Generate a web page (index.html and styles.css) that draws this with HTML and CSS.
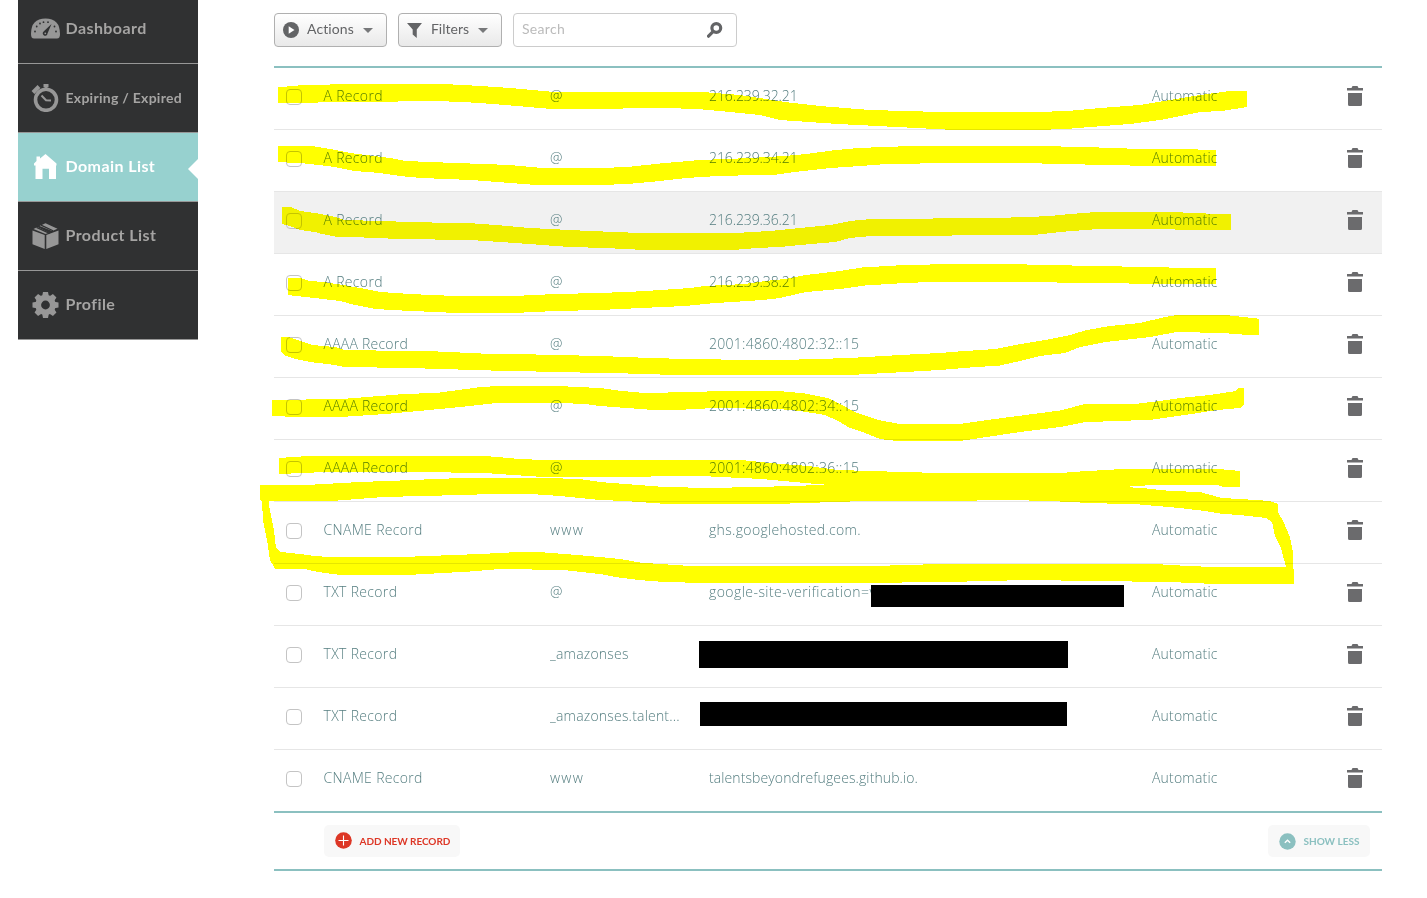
FILE: index.html
```html
<!DOCTYPE html>
<html lang="en">
<head>
<meta charset="utf-8">
<title>Domain List</title>
<link rel="stylesheet" href="styles.css">
</head>
<body>
<svg class="defs" width="0" height="0">
  <symbol id="trash" viewBox="0 0 16 20"><path d="M0 2h4.500L5.500 0h5l1 2H16v2.500H0zM1 7h14v11.500Q15 20 13.500 20h-11Q1 20 1 18.500z"/></symbol>
</svg>
<div class="page">
  <nav class="sidebar">
    <a class="item first"><svg class="icon" width="29" height="28" viewBox="0 0 29 28"><path fill="#979797" d="M3 24.500Q0 24.500 0 20Q0 4.500 14.500 4.500T29 20Q29 24.500 26 24.500z"/><g fill="#303132"><circle cx="4" cy="17.500" r=".9"/><circle cx="5.700" cy="12.500" r=".9"/><circle cx="9" cy="9.500" r=".9"/><circle cx="12.500" cy="8.200" r=".9"/><circle cx="17" cy="8.200" r=".9"/><circle cx="23.500" cy="12.500" r=".9"/><circle cx="25" cy="17.500" r=".9"/><path d="M20.500 10 16.500 19.500A2.400 2.400 0 1 1 12.600 17.500z"/></g><circle cx="14.300" cy="19.300" r=".9" fill="#979797"/></svg><span>Dashboard</span></a>
    <a class="item"><svg class="icon" width="29" height="28" viewBox="0 0 29 28"><g fill="none" stroke="#979797"><circle cx="15" cy="15.800" r="10.500" stroke-width="3.600"/><path d="M15 4V0M12.500 1.500h5" stroke-width="3"/><path d="m2 8.500 6-6" stroke-width="4"/><path d="m10.500 11.500 4.500 4.800 5 .3" stroke-width="2"/></g></svg><span class="small">Expiring / Expired</span></a>
    <a class="item active"><svg class="icon" width="29" height="28" viewBox="0 0 29 28"><path fill="#fff" d="M4.500 26V12.500H3V10.500L5.500 8V3.500H9V5.500L14.500 1 25.500 10.500v2H25V26h-7V15.800h-6.500V26z"/></svg><span>Domain List</span></a>
    <a class="item"><svg class="icon" width="29" height="28" viewBox="0 0 29 28"><path fill="#979797" d="m1.500 8.500 12.200 4.500V27L1.500 22.300zM27.500 8.500 15.300 13V27l12.200-4.700zM6.500 5 17.800 10.700 14.500 12 2.500 7zM8.500 4 14.500 1.200l12 5.500-5.200 2.300z"/><path d="m5.500 5.400 13 6M10 3.100l12 5.700" stroke="#303132" stroke-width="1.200"/></svg><span>Product List</span></a>
    <a class="item"><svg class="icon" width="29" height="28" viewBox="-14.500 -14 29 28"><g fill="#979797"><circle r="10.200"/><path id="tooth" d="M-3.300-9-2.500-13h5l.8 4zM-3.300 9-2.500 13h5l.8-4z"/><use href="#tooth" transform="rotate(45)"/><use href="#tooth" transform="rotate(90)"/><use href="#tooth" transform="rotate(135)"/></g><circle r="4.400" fill="#303132"/></svg><span>Profile</span></a>
  </nav>
  <main class="content">
    <div class="toolbar">
      <button class="btn actions"><svg width="16" height="16" viewBox="0 0 16 16"><circle cx="8" cy="8" r="8" fill="#636466"/><path d="M5.700 4.200 11.500 8l-5.800 3.800z" fill="#fff"/></svg><span>Actions</span><i class="caret"></i></button>
      <button class="btn filters"><svg width="15" height="15" viewBox="0 0 15 15"><path fill="#636466" d="M0 0h15L9.800 6.500V15L5.700 11.500v-5z"/></svg><span>Filters</span><i class="caret"></i></button>
      <div class="search"><span>Search</span><svg width="16" height="16" viewBox="0 0 16 16"><circle cx="9.300" cy="6" r="4.400" fill="none" stroke="#636466" stroke-width="3.200"/><path d="m6 9.700-4.500 4.500" stroke="#636466" stroke-width="3.200" stroke-linecap="round"/></svg></div>
    </div>
    <div class="records">
      <div class="row"><i class="check"></i><span class="type">A Record</span><span>@</span><span class="ip4">216.239.32.21</span><span>Automatic</span><svg class="trash"><use href="#trash"/></svg></div>
      <div class="row"><i class="check"></i><span class="type">A Record</span><span>@</span><span class="ip4">216.239.34.21</span><span>Automatic</span><svg class="trash"><use href="#trash"/></svg></div>
      <div class="row hover"><i class="check"></i><span class="type">A Record</span><span>@</span><span class="ip4">216.239.36.21</span><span>Automatic</span><svg class="trash"><use href="#trash"/></svg></div>
      <div class="row"><i class="check"></i><span class="type">A Record</span><span>@</span><span class="ip4">216.239.38.21</span><span>Automatic</span><svg class="trash"><use href="#trash"/></svg></div>
      <div class="row"><i class="check"></i><span class="type aaaa">AAAA Record</span><span>@</span><span class="ip6">2001:4860:4802:32::15</span><span>Automatic</span><svg class="trash"><use href="#trash"/></svg></div>
      <div class="row"><i class="check"></i><span class="type aaaa">AAAA Record</span><span>@</span><span class="ip6">2001:4860:4802:34::15</span><span>Automatic</span><svg class="trash"><use href="#trash"/></svg></div>
      <div class="row"><i class="check"></i><span class="type aaaa">AAAA Record</span><span>@</span><span class="ip6">2001:4860:4802:36::15</span><span>Automatic</span><svg class="trash"><use href="#trash"/></svg></div>
      <div class="row"><i class="check"></i><span class="type">CNAME Record</span><span class="www">www</span><span class="ghs">ghs.googlehosted.com.</span><span>Automatic</span><svg class="trash"><use href="#trash"/></svg></div>
      <div class="row"><i class="check"></i><span class="type">TXT Record</span><span>@</span><span class="wide">google-site-verification=v</span><span>Automatic</span><svg class="trash"><use href="#trash"/></svg></div>
      <div class="row"><i class="check"></i><span class="type">TXT Record</span><span>_amazonses</span><span></span><span>Automatic</span><svg class="trash"><use href="#trash"/></svg></div>
      <div class="row"><i class="check"></i><span class="type">TXT Record</span><span>_amazonses.talent...</span><span></span><span>Automatic</span><svg class="trash"><use href="#trash"/></svg></div>
      <div class="row"><i class="check"></i><span class="type">CNAME Record</span><span class="www">www</span><span class="host">talentsbeyondrefugees.github.io.</span><span>Automatic</span><svg class="trash"><use href="#trash"/></svg></div>
    </div>
    <div class="footer">
      <button class="pill add"><svg width="17" height="17" viewBox="0 0 17 17"><circle cx="8.500" cy="8.500" r="8.300" fill="#dd3726"/><path d="M3.500 8.500h10M8.500 3.500v10" stroke="#fff" stroke-width="1.100"/></svg><span>ADD NEW RECORD</span></button>
      <button class="pill less"><svg width="17" height="17" viewBox="0 0 17 17"><circle cx="8.500" cy="8.500" r="8.200" fill="#8bc0c0"/><path d="m5.800 9.800 2.700-2.600 2.700 2.600" fill="none" stroke="#fff" stroke-width="1.400"/></svg><span>SHOW LESS</span></button>
    </div>
  </main>
</div>
<svg class="marks" width="1427" height="898" viewBox="0 0 1427 898">
  <g fill="#ff0" fill-rule="evenodd">
    <path d="M278 87.300 303 85 356 84 444 84 481 86 510 88 555 92 703 92 740 95 785 102 820 106 870 110 940 112 1036 112 1068 111 1100 108 1140 105 1170 100 1200 95 1230 91 1247 91V107L1222 111 1200 112 1160 120 1130 124 1090 127 1066 129 1036 130 954 130 917 128 838 124 780 120 760 115 720 111 703 109.500 670 108 646 108 600 109 552 109 505 105 475 102.700 438 101 278 103z"/>
    <path d="M278 146 312 146 330 149 350 153 390 158 405 161 443 162.500 510 165 542 168 600 168 627 167 660 163.500 700 160 750 158 785 156 806 154 832 150.500 858 148 911 146 1036 146 1085 147 1127 148.500 1198 149.500 1216 150V166L1130 165.500 1085 164.500 1042 163.500 940 163 880 164.500 860 166 830 168 795 172 777 174.500 718 176 686 178 660 181 628 184 600 185 536 185 510 183 471 180 421 178 400 176 380 173 354 171 340 168 328 166 305 163.500 278 162z"/>
    <path d="M282 207 291 207 300 211 321 214 335 217 345 220 380 221 411 222 475 223.500 496 225 530 228 590 231 641 233 735 233 770 231 800 228 830 225 850 221 871 219 994 218 1028 217 1050 216 1070 214 1096 212 1172 212 1217 214 1231 214V230L1175 230 1174 229 1098 229 1060 232 1034 235 871 236 850 238 835 242 800 245 780 247 757 248 733 250 645 250 605 248 570 247 515 243 470 240 400 239 364 237.500 337 237 322 234 315 232 300 230 290 226 282 224z"/>
    <path d="M288 278 300 278 310 281 324 282 343 285 360 288 380 292 410 294 455 296 514 296 555 294 600 293 636 291.500 661 290 690 288 705 286 745 284 765 281 785 279 806 275 840 271 862 267.500 905 265 954 264 1004 264 1072 265.500 1122 266.500 1193 268 1216 268V284L1150 284 1129 283.500 1076 283 1020 281.500 945 281.500 905 283 865 285.500 840 289 806 292 780 298 762 300 733 302 715 303 685 306 662 307 600 310 555 311 513 313 457 313 402 310.500 375 309 355 305 340 301 310 297.500 288 295z"/>
    <path d="M281 337 288 337 300 341 312 345 335 347 345 350 438 351.500 481 353.500 536 354.500 600 356 650 358 688 359 754 360 799 359.500 850 358 900 355 940 353 958 351.500 995 349 1015 345 1045 340 1070 335 1087 330 1110 326 1140 323 1165 317 1177 315 1225 315 1257 318.500 1259 319V335L1248 335 1222 333 1177 332 1150 337 1105 342 1080 347 1065 353 1040 356 1020 361 1000 365.500 970 367.500 940 370 905 372 850 375 691 375.500 644 374 611 373 580 372.500 491 370.500 408 368 345 367 331 364.500 310 362 295 359 284 355 281 352z"/>
    <path d="M272 400 340 399 355 398 398 394.500 440 392.500 477 387.500 497 386 557 386 600 388 622 391 644 393 692 392 721 391 779 391 805 393.500 828 398 840 404 855 412 878 420 900 424 960 424 980 421 1010 417 1060 410.500 1085 404 1139 403.500 1160 401 1180 398 1210 395 1236 391 1238 388 1244 388V405L1240 408 1217 410 1185 415 1153 419.500 1120 421 1085 422 1060 427 1020 432 980 438 960 441 897 441 880 439 865 433 850 428 838 421 825 415 800 411 778 409 714 408 686 409.500 654 410 600 406 585 404 561 403 497 403 460 407 419 411 385 414 340 417 285 416.500 272 416z"/>
    <path d="M279 458 308 456 485 456 520 459 543 460 741 460 770 463 808 466 838 470 869 471 940 473 1061 473 1080 471.500 1123 469 1218 469 1240 471V487L1223 487 1218 485 1152 485 1123 487 1040 495 900 495 830 485 805 483 762 479 701 476 600 477 543 477 513 475 485 473 417 472 325 472 279 474z"/>
    <path d="M260 485 315 484.500 360 482 400 480.500 461 478 545 478 580 479 600 482 632 484.500 665 487 711 488 795 486 840 484 1123 484 1123 487 1142 488 1171 491 1200 492 1222 498 1240 499 1270 501 1278 504 1278 512 1284 523 1290 537 1293 553 1294 584 1226 584.500 1181 582.500 1107 581 1014 580 1000 581 869 583 698 583 658 581.500 639 580 615 577 600 574 563 570 500 569 470 571.500 407 575 337 574.500 318 572 305 569 275 568.500 270 560 267 540 263 520 262 501 260 500zM269 501 317 501 338 500.500 384 497 461 495 493 494 530 494 560 496 600 500 625 501 660 503.500 790 503.500 850 501.500 924 501 940 501 1014 500 1060 501.500 1090 503 1140 504.500 1180 508 1205 511 1223 514 1240 515 1266 518 1272 522 1275 536 1281 548 1286 567 1228 567.500 1188 566 1155 564 1037 563.500 940 564 890 565.500 690 566 660 564 640 562.500 620 559 600 557 577 555 538 552 519 552 480 554 402 557 337 557.500 315 556 300 554 281 552 276 548 274 530 269 505z"/>
  </g>
  <path d="M871 585h253v22H871zM699 641h369v27H699zM700 702h367v24H700z"/>
</svg>
</body>
</html>
```
FILE: styles.css
```css
body { margin: 0; background: #fff; font-family: "Open Sans", sans-serif; }
.defs, .marks { position: absolute; left: 0; top: 0; }
.marks { mix-blend-mode: multiply; pointer-events: none; shape-rendering: crispEdges; }
.page { display: flex; align-items: flex-start; width: 1427px; height: 898px; overflow: hidden; padding-left: 18px; box-sizing: border-box; }
.sidebar { width: 180px; }
.item { display: flex; align-items: center; gap: 6px; height: 69px; box-sizing: border-box; padding-left: 12.5px; border-bottom: 1px solid #979797; background: #303132; color: #a5a4a3; font: 700 16px Lato, sans-serif; letter-spacing: .42px; }
.item span { padding-bottom: 3px; }
.item.first { height: 64px; padding-bottom: 7px; }
.item.first span { padding-bottom: 2px; }
.item .small { font-size: 14px; letter-spacing: .27px; padding-bottom: 1px; }
.item.active { background: #97d1cf; color: #fff; position: relative; }
.item.active::after { content: ""; position: absolute; right: 0; top: 26px; border: solid transparent; border-width: 10px 10px 10px 0; border-right-color: #fff; }
.content { width: 1108px; margin-left: 76px; }
.toolbar { display: flex; height: 66px; padding-top: 13px; box-sizing: border-box; }
.btn { display: flex; align-items: center; height: 34px; box-sizing: border-box; border: 1px solid #b0b0b0; border-radius: 4px; background: linear-gradient(#fff, #e9e9e9); color: #636466; font: 400 14px Lato, sans-serif; letter-spacing: .1px; padding: 0 13px 0 8px; }
.btn span { padding-bottom: 3px; }
.actions { width: 113px; margin-right: 11px; gap: 8px; }
.filters { width: 104px; margin-right: 11px; gap: 9px; letter-spacing: 0; }
.caret { margin-left: auto; border: 5px solid transparent; border-top-color: #77787a; border-bottom: 0; }
.search { display: flex; align-items: center; justify-content: space-between; width: 224px; height: 34px; box-sizing: border-box; border: 1px solid #ccc; border-radius: 4px; padding: 0 13px 0 8px; color: #bbb; font: 400 14px Lato, sans-serif; letter-spacing: .3px; }
.search span { padding-bottom: 3px; }
.records { border-top: 2px solid #8bc0c0; border-bottom: 2px solid #8bc0c0; }
.row { display: grid; grid-template-columns: 37.5px 226.5px 159px 443px 195px 16px; align-items: center; height: 62px; box-sizing: border-box; padding: 0 0 6px 12px; border-bottom: 1px solid #e6e6e6; color: #557e80; font-weight: 300; font-size: 14px; line-height: 20px; letter-spacing: .2px; white-space: nowrap; }
.row:last-child { height: 61px; padding-bottom: 5px; border: 0; }
.row.hover { background: #f1f1f1; }
.check { width: 16px; height: 16px; box-sizing: border-box; border: 1px solid #c4c4c4; border-radius: 4px; margin-top: 2px; }
.type { letter-spacing: .33px; }
.aaaa { letter-spacing: .24px; }
.ip4 { letter-spacing: -.1px; }
.ip6 { letter-spacing: .27px; }
.wide { letter-spacing: .44px; }
.ghs { letter-spacing: .34px; }
.host { letter-spacing: .1px; }
.www { letter-spacing: 1.2px; }
.trash { width: 16px; height: 20px; fill: #6b6b6d; }
.footer { display: flex; justify-content: space-between; align-items: center; height: 58px; box-sizing: border-box; padding: 0 12px 0 50px; border-bottom: 2px solid #8bc0c0; }
.pill { display: flex; align-items: center; height: 32px; border: 0; border-radius: 5px; background: #f8f8f8; font: 700 10px Lato, sans-serif; }
.pill svg { margin-bottom: 2px; }
.add { width: 136px; padding: 0 0 0 11px; gap: 7.5px; color: #dd3726; letter-spacing: -.05px; }
.less { width: 102px; padding: 0 0 0 10.500px; gap: 8px; color: #8bc0c0; }
.less svg { margin-bottom: 0; }
```
